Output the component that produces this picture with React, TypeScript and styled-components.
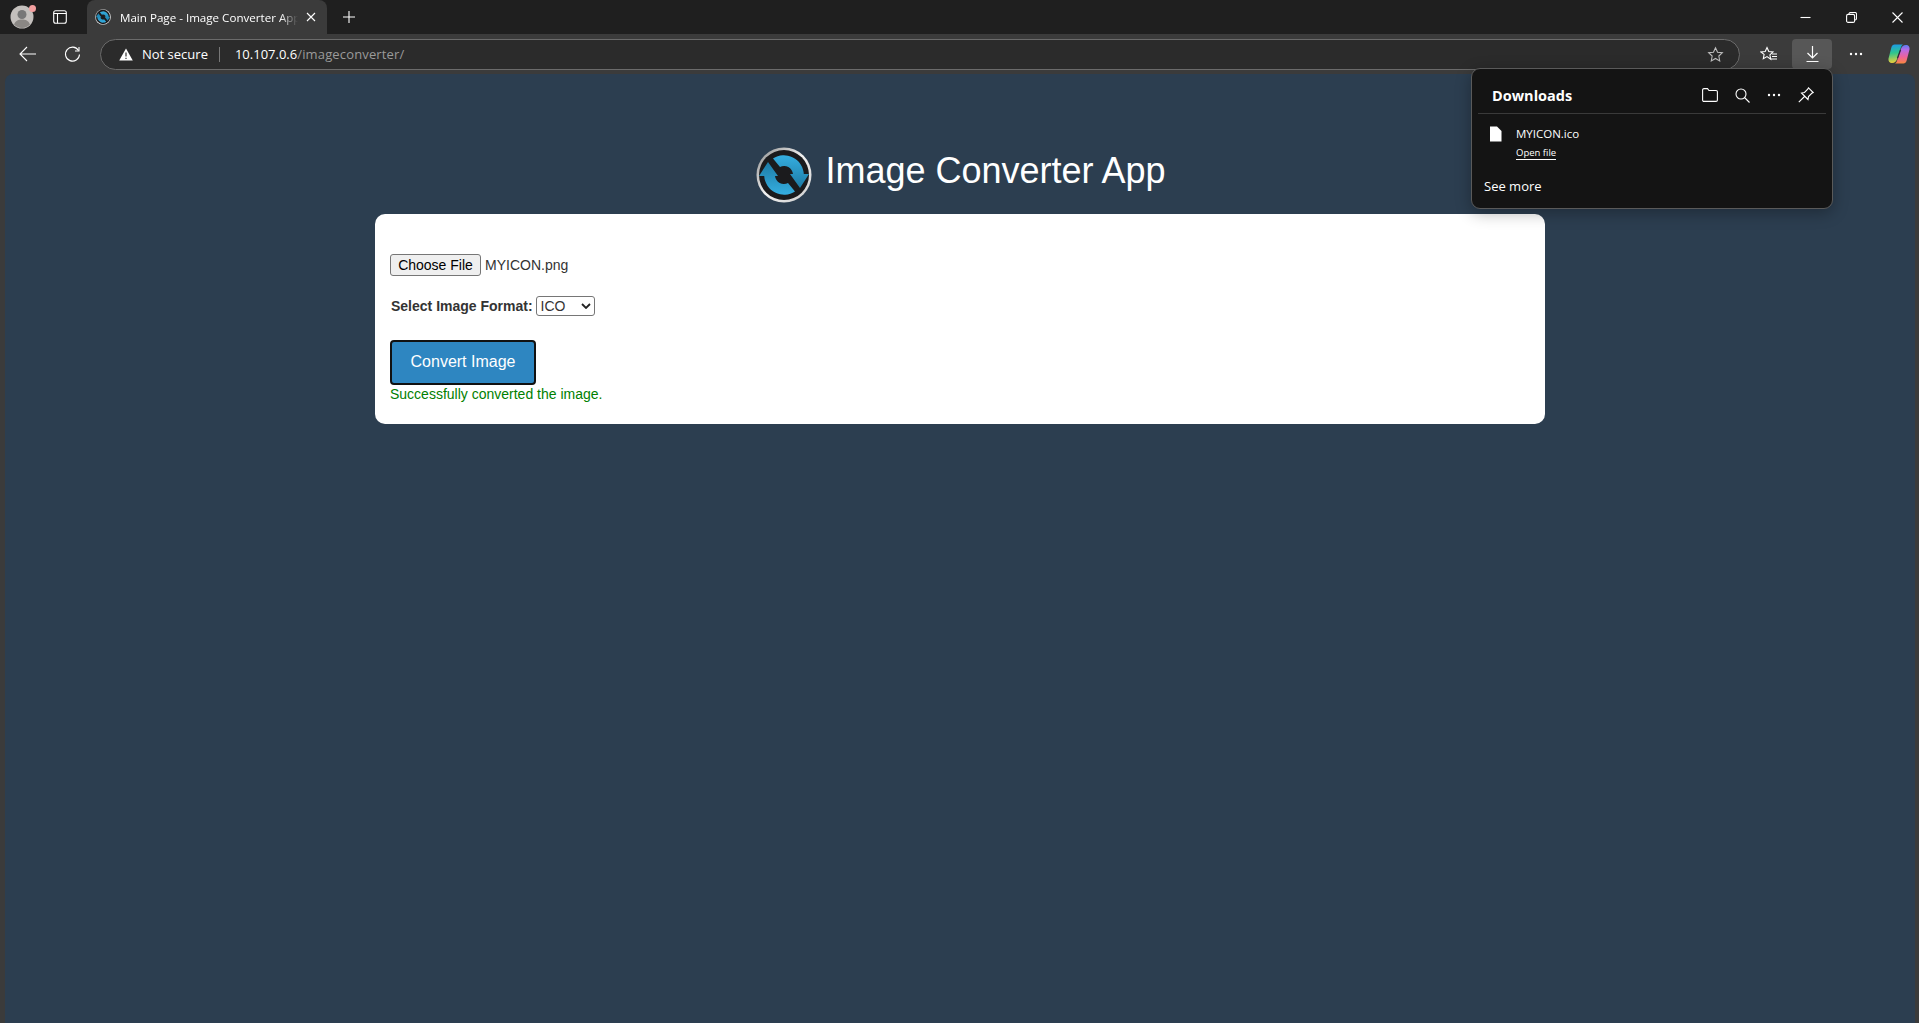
import { createGlobalStyle, styled } from "styled-components";

const Global = createGlobalStyle`
  html, body { margin: 0; padding: 0; height: 100%; background: #3b3b3b; overflow: hidden; }
  #root { height: 100%; }
`;

const Shell = styled.div`
  height: 1023px;
  display: flex;
  flex-direction: column;
  font-family: "Liberation Sans", Arial, sans-serif;
`;

const TabStrip = styled.div`
  height: 34px;
  background: #1f1f1f;
  display: flex;
  align-items: flex-start;
  flex-shrink: 0;
`;

const Avatar = styled.div`
  position: relative;
  width: 24px;
  height: 24px;
  margin: 5px 0 0 10px;
`;

const AvatarDot = styled.span`
  position: absolute;
  top: 0;
  right: -2px;
  width: 7px;
  height: 7px;
  border-radius: 50%;
  background: #f4a0a0;
`;

const TabToggle = styled.div`
  margin: 10px 0 0 19px;
  width: 14px;
  height: 14px;
  display: flex;
`;

const Tab = styled.div`
  margin-left: 20px;
  width: 240px;
  height: 34px;
  background: #3b3b3b;
  border-radius: 8px 8px 0 0;
  display: flex;
  align-items: center;
  padding: 0 11px 0 8px;
  box-sizing: border-box;
  color: #fff;
  font: 11.6px "Open Sans", "Noto Sans", sans-serif;
`;

const TabTitle = styled.span`
  flex: 1;
  margin: 0 8px 0 9px;
  white-space: nowrap;
  overflow: hidden;
  -webkit-mask-image: linear-gradient(to right, #000 90%, transparent);
  mask-image: linear-gradient(to right, #000 90%, transparent);
`;

const NewTab = styled.div`
  margin: 10px 0 0 15px;
  width: 14px;
  height: 14px;
  display: flex;
`;

const WindowControls = styled.div`
  margin-left: auto;
  display: flex;
  height: 34px;
  align-items: center;
  gap: 35px;
  padding-right: 16px;
`;

const Toolbar = styled.div`
  height: 40px;
  display: flex;
  align-items: center;
  background: #3b3b3b;
  flex-shrink: 0;
`;

const ToolButton = styled.div<{ $active?: boolean; $w?: number }>`
  width: ${(p) => p.$w ?? 40}px;
  height: 30px;
  display: flex;
  align-items: center;
  justify-content: center;
  border-radius: 4px;
  background: ${(p) => (p.$active ? "#575757" : "transparent")};
`;

const BackGroup = styled.div`
  display: flex;
  padding-left: 8px;
  gap: 4px;
`;

const AddressBar = styled.div`
  width: 1640px;
  height: 31px;
  box-sizing: border-box;
  margin-left: 8px;
  border: 1px solid #6b6b6b;
  border-radius: 16px;
  background: #2b2b2b;
  display: flex;
  align-items: center;
  padding: 0 15px 0 18px;
  color: #fff;
  font: 13px "Open Sans", "Noto Sans", sans-serif;
`;

const NotSecure = styled.span`
  margin-left: 9px;
`;

const Divider = styled.span`
  width: 1px;
  height: 15px;
  background: #777;
  margin: 0 15px 0 11px;
`;

const Host = styled.span`
  color: #fff;
`;

const UrlPath = styled.span`
  color: #9a9a9a;
  letter-spacing: 0.15px;
`;

const StarSlot = styled.div`
  margin-left: auto;
  display: flex;
`;

const ToolbarRight = styled.div`
  display: flex;
  align-items: center;
  margin-left: 5px;
`;

const Page = styled.main`
  flex: 1;
  margin: 0 4px 0 5px;
  background: #2c3e50;
  border-radius: 8px 8px 0 0;
  position: relative;
  display: flex;
  flex-direction: column;
  align-items: center;
`;

const Heading = styled.div`
  display: flex;
  align-items: center;
  gap: 13px;
  margin-top: 61px;
  padding-left: 2px;
  height: 79px;
`;

const HeadingText = styled.h1`
  margin: 0 0 7px;
  font-size: 36px;
  font-weight: 400;
  color: #fff;
`;

const Card = styled.section`
  width: 1170px;
  height: 210px;
  box-sizing: border-box;
  background: #fff;
  border-radius: 10px;
  padding: 40px 15px 0;
  font-size: 14px;
  color: #333;
`;

const FileRow = styled.div`
  display: flex;
  align-items: center;
  height: 22px;
`;

const ChooseButton = styled.span`
  box-sizing: border-box;
  height: 22px;
  width: 91px;
  display: flex;
  align-items: center;
  justify-content: center;
  background: #efefef;
  border: 1px solid #767676;
  border-radius: 3px;
  color: #000;
  font-size: 14px;
`;

const FileName = styled.span`
  margin-left: 4px;
`;

const FormatRow = styled.div`
  display: flex;
  align-items: center;
  margin: 20px 0 0 1px;
  height: 20px;
`;

const FormatLabel = styled.label`
  font-weight: 700;
`;

const FormatSelect = styled.div`
  box-sizing: border-box;
  margin-left: 3px;
  width: 59px;
  height: 20px;
  border: 1px solid #767676;
  border-radius: 3px;
  display: flex;
  align-items: center;
  justify-content: space-between;
  padding: 0 3px 0 4px;
  color: #333;
`;

const ConvertButton = styled.button`
  display: block;
  box-sizing: border-box;
  margin-top: 24px;
  padding: 0 0 2px;
  width: 146px;
  height: 45px;
  background: #2e86c1;
  border: 2px solid #111;
  border-radius: 4px;
  color: #fff;
  font: 16px "Liberation Sans", Arial, sans-serif;
`;

const SuccessText = styled.div`
  color: #008000;
  margin-top: 1px;
`;

const Flyout = styled.aside`
  position: absolute;
  top: -6px;
  left: 1466px;
  width: 362px;
  height: 141px;
  box-sizing: border-box;
  background: #141414;
  border: 1px solid #5a5a5a;
  border-radius: 9px;
  box-shadow: 0 4px 16px rgba(0, 0, 0, 0.3);
  color: #fff;
  font-family: "Open Sans", "Noto Sans", sans-serif;
  z-index: 2;
`;

const FlyoutHeader = styled.div`
  height: 45px;
  box-sizing: border-box;
  margin: 0 6px;
  border-bottom: 1px solid #3a3a3a;
  display: flex;
  align-items: center;
  padding: 8px 12px 0 14px;
`;

const FlyoutTitle = styled.span`
  font-size: 14.5px;
  font-weight: 700;
`;

const FlyoutIcons = styled.div`
  margin-left: auto;
  display: flex;
  gap: 17px;
  align-items: center;
`;

const DownloadItem = styled.div`
  display: flex;
  padding: 12px 0 0 17px;
`;

const DownloadInfo = styled.div`
  margin-left: 14px;
`;

const DownloadName = styled.div`
  font-size: 11.5px;
  line-height: 16px;
`;

const OpenLink = styled.a`
  display: block;
  width: fit-content;
  font-size: 9.5px;
  line-height: 12px;
  margin-top: 5px;
  border-bottom: 1px solid #fff;
`;

const SeeMore = styled.div`
  font-size: 13px;
  margin: 17px 0 0 12px;
`;

const Stroke = { fill: "none", stroke: "#fff", strokeWidth: 1.1 };

const ARC =
  "M17 11.500A20 20 0 0 1 47.800 27L53 27L44 41L34 27L37 27A9 9 0 0 0 24 20Z";

const BLADE =
  "M6.500 0.500H15C13.500 1.500 13 3 12.500 4.500L9 15C8.500 17 7 19 4 19C1.500 19 0 17 0.500 14.500L3.500 3C4 1.500 5 0.500 6.500 0.500Z";

const Logo = ({ size }: { size: number }) => (
  <svg width={size} height={size} viewBox="0 0 56 56">
    <defs>
      <linearGradient id="ring" x1="0" y1="0" x2="1" y2="1">
        <stop offset="0" stopColor="#8a8a8a" />
        <stop offset="0.5" stopColor="#f2f2f2" />
        <stop offset="1" stopColor="#c9c9c9" />
      </linearGradient>
      <linearGradient id="blueTop" x1="0" y1="0" x2="0" y2="1">
        <stop offset="0" stopColor="#35aee0" />
        <stop offset="1" stopColor="#1d7ba5" />
      </linearGradient>
    </defs>
    <circle cx="28" cy="28" r="27.500" fill="url(#ring)" />
    <circle cx="28" cy="28" r="25" fill="#1b1b1d" />
    <path d={ARC} fill="url(#blueTop)" />
    <path d={ARC} fill="url(#blueTop)" transform="rotate(180 28 28)" />
  </svg>
);

const Dots = () => (
  <svg width="14" height="4" viewBox="0 0 14 4">
    <circle cx="2" cy="2" r="1.200" fill="#fff" />
    <circle cx="7" cy="2" r="1.200" fill="#fff" />
    <circle cx="12" cy="2" r="1.200" fill="#fff" />
  </svg>
);

const App = () => (
  <Shell>
    <Global />
    <TabStrip>
      <Avatar>
        <svg width="24" height="24" viewBox="0 0 24 24">
          <circle cx="12" cy="12" r="11.500" fill="#c4c0bd" />
          <circle cx="12" cy="9.500" r="4.500" fill="#777" />
          <path d="M4 19.500c1.500-4 4.500-5 8-5s6.500 1 8 5a11 11 0 0 1-16 0Z" fill="#8a8784" />
        </svg>
        <AvatarDot />
      </Avatar>
      <TabToggle>
        <svg width="14" height="14" viewBox="0 0 14 14">
          <rect x="0.700" y="0.700" width="12.600" height="12.600" rx="2" {...Stroke} />
          <path d="M0.700 3.500H13.300M4.500 3.500V13.300" {...Stroke} />
        </svg>
      </TabToggle>
      <Tab>
        <Logo size={16} />
        <TabTitle>Main Page - Image Converter App</TabTitle>
        <svg width="10" height="10" viewBox="0 0 10 10">
          <path d="M1 1L9 9M9 1L1 9" {...Stroke} />
        </svg>
      </Tab>
      <NewTab>
        <svg width="14" height="14" viewBox="0 0 14 14">
          <path d="M7 1V13M1 7H13" {...Stroke} />
        </svg>
      </NewTab>
      <WindowControls>
        <svg width="11" height="11" viewBox="0 0 11 11">
          <path d="M0.500 5.500H10.500" {...Stroke} />
        </svg>
        <svg width="11" height="11" viewBox="0 0 11 11">
          <rect x="0.600" y="2.400" width="8" height="8" rx="1.500" {...Stroke} />
          <path d="M3 2.400V2a1.500 1.500 0 0 1 1.500-1.500H9A1.500 1.500 0 0 1 10.500 2v4.500A1.500 1.500 0 0 1 9 8" {...Stroke} />
        </svg>
        <svg width="11" height="11" viewBox="0 0 11 11">
          <path d="M0.500 0.500L10.500 10.500M10.500 0.500L0.500 10.500" {...Stroke} />
        </svg>
      </WindowControls>
    </TabStrip>
    <Toolbar>
      <BackGroup>
        <ToolButton>
          <svg width="18" height="16" viewBox="0 0 18 16">
            <path d="M1 8H17M8 1L1 8L8 15" {...Stroke} />
          </svg>
        </ToolButton>
        <ToolButton>
          <svg width="17" height="17" viewBox="0 0 17 17">
            <path d="M14.500 4.500A7 7 0 1 0 15.500 8.500" {...Stroke} />
            <path d="M15 1V5H11" {...Stroke} />
          </svg>
        </ToolButton>
      </BackGroup>
      <AddressBar>
        <svg width="14" height="13" viewBox="0 0 14 13">
          <path d="M7 0.500L13.800 12.500H0.200Z" fill="#fff" />
          <path d="M7 4.500V8.500M7 9.700V11" stroke="#333" strokeWidth="1.200" />
        </svg>
        <NotSecure>Not secure</NotSecure>
        <Divider />
        <Host>10.107.0.6</Host>
        <UrlPath>/imageconverter/</UrlPath>
        <StarSlot>
          <svg width="17" height="17" viewBox="0 0 24 24">
            <path d="M12 2.500l2.900 6.200 6.800.8-5 4.700 1.300 6.800-6-3.400-6 3.400 1.300-6.800-5-4.700 6.800-.8Z" fill="none" stroke="#bdbdbd" strokeWidth="1.500" />
          </svg>
        </StarSlot>
      </AddressBar>
      <ToolbarRight>
        <ToolButton $w={47}>
          <svg width="18" height="17" viewBox="0 0 18 17">
            <path d="M7 1.500l1.800 4 4.200.5-3.100 2.900.8 4.300L7 10.600l-3.700 2.100.8-4.300L1 6l4.200-.5Z" {...Stroke} />
            <path d="M12 8H17M12 10.500H17M11 13H17" {...Stroke} />
          </svg>
        </ToolButton>
        <ToolButton $active>
          <svg width="13" height="18" viewBox="0 0 13 18">
            <path d="M6.500 1V13M1.500 8L6.500 13L11.500 8M0.500 16.500H12.500" fill="none" stroke="#fff" strokeWidth="1.200" />
          </svg>
        </ToolButton>
        <ToolButton $w={48}>
          <Dots />
        </ToolButton>
        <ToolButton $w={38}>
          <svg width="22" height="20" viewBox="0 0 22 20">
            <defs>
              <linearGradient id="cpA" x1="0.400" y1="0" x2="0.500" y2="1">
                <stop offset="0" stopColor="#1c9be8" />
                <stop offset="0.450" stopColor="#2fc58d" />
                <stop offset="1" stopColor="#f7d036" />
              </linearGradient>
              <linearGradient id="cpB" x1="0.500" y1="0" x2="0.500" y2="1">
                <stop offset="0" stopColor="#f9883f" />
                <stop offset="0.350" stopColor="#ee6299" />
                <stop offset="0.750" stopColor="#b56be8" />
                <stop offset="1" stopColor="#5a7df0" />
              </linearGradient>
            </defs>
            <path d={BLADE} fill="url(#cpA)" />
            <path d={BLADE} fill="url(#cpB)" transform="rotate(180 11 10)" />
            <path d="M12.500 6L9.500 14" stroke="#2a2a3a" strokeWidth="1.300" />
          </svg>
        </ToolButton>
      </ToolbarRight>
    </Toolbar>
    <Page>
      <Heading>
        <Logo size={56} />
        <HeadingText>Image Converter App</HeadingText>
      </Heading>
      <Card>
        <FileRow>
          <ChooseButton>Choose File</ChooseButton>
          <FileName>MYICON.png</FileName>
        </FileRow>
        <FormatRow>
          <FormatLabel>Select Image Format:</FormatLabel>
          <FormatSelect>
            ICO
            <svg width="10" height="6" viewBox="0 0 10 6">
              <path d="M1 1L5 5L9 1" fill="none" stroke="#222" strokeWidth="1.800" />
            </svg>
          </FormatSelect>
        </FormatRow>
        <ConvertButton>Convert Image</ConvertButton>
        <SuccessText>Successfully converted the image.</SuccessText>
      </Card>
      <Flyout>
        <FlyoutHeader>
          <FlyoutTitle>Downloads</FlyoutTitle>
          <FlyoutIcons>
            <svg width="16" height="14" viewBox="0 0 16 14">
              <path d="M0.600 3V2A1.400 1.400 0 0 1 2 0.600H5.500L7 2.500H14A1.400 1.400 0 0 1 15.400 4V12A1.400 1.400 0 0 1 14 13.400H2A1.400 1.400 0 0 1 0.600 12Z" {...Stroke} />
            </svg>
            <svg width="15" height="15" viewBox="0 0 15 15">
              <circle cx="6" cy="6" r="5" {...Stroke} />
              <path d="M9.500 9.500L14.500 14.500" {...Stroke} />
            </svg>
            <Dots />
            <svg width="16" height="16" viewBox="0 0 16 16">
              <path d="M10.500 0.800L15.200 5.500L13.800 6.300L10.500 9.500L10 12.500L3.500 6L6.500 5.500L9.700 2.200ZM6.500 9.500L0.800 15.200" {...Stroke} />
            </svg>
          </FlyoutIcons>
        </FlyoutHeader>
        <DownloadItem>
          <svg width="13" height="16" viewBox="0 0 13 16">
            <path d="M1 0.500H8L12.500 5V15.500H1Z" fill="#fff" />
          </svg>
          <DownloadInfo>
            <DownloadName>MYICON.ico</DownloadName>
            <OpenLink>Open file</OpenLink>
          </DownloadInfo>
        </DownloadItem>
        <SeeMore>See more</SeeMore>
      </Flyout>
    </Page>
  </Shell>
);

export default App;
